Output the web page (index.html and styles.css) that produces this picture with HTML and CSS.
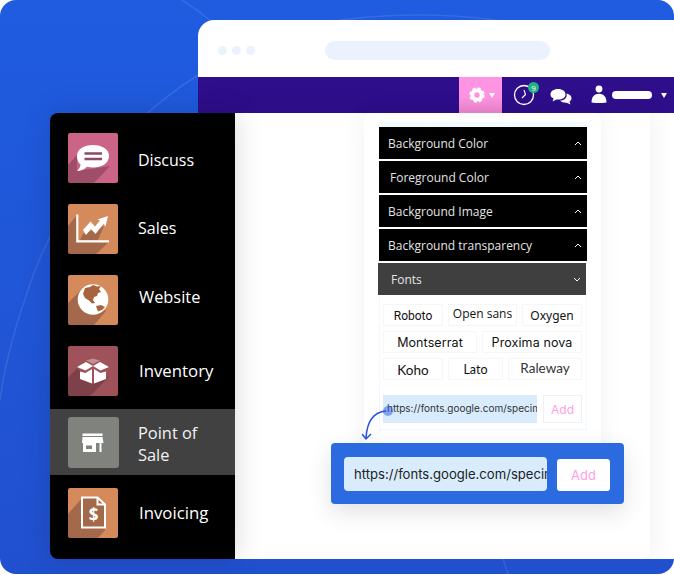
FILE: index.html
```html
<!DOCTYPE html>
<html lang="en">
<head>
    <meta charset="UTF-8">
    <title>Theme fonts</title>
    <link rel="stylesheet" href="styles.css">
</head>
<body>
<div class="stage">
    <svg class="lines" width="674" height="574" viewBox="0 0 674 574">
        <path d="M182 0 Q198 10 212 22"/>
        <path d="M198 75 C120 125 55 205 28 290 C14 330 4 370 0 400"/>
        <path d="M340 20 Q420 10 495 20"/>
        <path d="M503 559 L508 574"/>
    </svg>

    <div class="window">
        <div class="chrome">
            <div class="dots"><span></span><span></span><span></span></div>
            <div class="address"></div>
        </div>
        <div class="nav">
            <div class="nav-settings">
                <svg width="16" height="16" viewBox="0 0 18 18">
                    <circle class="gear-ring" cx="9" cy="9" r="5.2"/>
                    <circle class="gear-teeth" cx="9" cy="9" r="7.2"/>
                </svg>
                <span class="caret"></span>
            </div>
            <div class="nav-clock">
                <svg width="24" height="24" viewBox="0 0 24 24">
                    <circle class="clock-face" cx="11" cy="13" r="9.5"/>
                    <path class="clock-hands" d="M11 8 L12.5 12.5 L9 16"/>
                </svg>
                <span class="badge">9</span>
            </div>
            <svg class="nav-chat" width="22" height="18" viewBox="0 0 22 18">
                <path class="bubble" d="M8 1 C12.5 1 15.5 3.4 15.5 6.4 C15.5 9.4 12.5 11.5 8 11.5 L6.5 11.5 L2.5 13.5 L3.6 10.6 C1.6 9.6 0.5 8.2 0.5 6.4 C0.5 3.4 3.5 1 8 1 Z"/>
                <path class="bubble" d="M16.6 5.5 C19.6 6 21.5 8 21.5 10.2 C21.5 11.8 20.6 12.9 19.5 13.7 L20.6 16.6 L16.5 14.8 C14.4 15 11.5 14.4 10 12.6 C13.5 12.6 17.4 10.4 16.6 5.5 Z"/>
            </svg>
            <svg class="nav-user" width="16" height="18" viewBox="0 0 16 18">
                <circle class="bubble" cx="8" cy="4" r="3.4"/>
                <path class="bubble" d="M0.5 17.5 C0.5 12 3.5 8.8 8 8.8 C12.5 8.8 15.5 12 15.5 17.5 Q8 18.5 0.5 17.5 Z"/>
            </svg>
            <span class="nav-name"></span>
            <span class="caret nav-caret"></span>
        </div>
        <div class="main">
            <div class="card">
                <div class="accordion">
                    <div class="acc-bar">Background Color
                        <svg class="chev" width="8" height="5" viewBox="0 0 8 5"><path d="M1 4 L4 1 L7 4"/></svg>
                    </div>
                    <div class="acc-bar acc-shift">Foreground Color
                        <svg class="chev" width="8" height="5" viewBox="0 0 8 5"><path d="M1 4 L4 1 L7 4"/></svg>
                    </div>
                    <div class="acc-bar">Background Image
                        <svg class="chev" width="8" height="5" viewBox="0 0 8 5"><path d="M1 4 L4 1 L7 4"/></svg>
                    </div>
                    <div class="acc-bar">Background transparency
                        <svg class="chev" width="8" height="5" viewBox="0 0 8 5"><path d="M1 4 L4 1 L7 4"/></svg>
                    </div>
                    <div class="acc-bar acc-open">Fonts
                        <svg class="chev" width="8" height="5" viewBox="0 0 8 5"><path d="M1 1 L4 4 L7 1"/></svg>
                    </div>
                    <div class="fonts">
                        <div class="chip-row">
                            <span class="chip w60 f-roboto">Roboto</span>
                            <span class="chip w69 f-open">Open sans</span>
                            <span class="chip w60 f-oxygen">Oxygen</span>
                        </div>
                        <div class="chip-row">
                            <span class="chip w94 f-mont">Montserrat</span>
                            <span class="chip w100 f-mont">Proxima nova</span>
                        </div>
                        <div class="chip-row">
                            <span class="chip w60 f-koho">Koho</span>
                            <span class="chip w55 f-lato">Lato</span>
                            <span class="chip w74 f-raleway">Raleway</span>
                        </div>
                        <div class="url-row">
                            <div class="url-input">https://fonts.google.com/specim</div>
                            <div class="url-add">Add</div>
                        </div>
                    </div>
                </div>
            </div>
        </div>
    </div>

    <div class="sidebar">
        <div class="app">
            <svg class="app-icon" width="50" height="50" viewBox="0 0 50 50">
                <rect class="bg-rose" width="50" height="50" rx="2"/>
                <path class="long-shadow" d="M9 22 L0 32 V48 Q0 50 2 50 H26 L42 33 L22 36 L9 38 Z"/>
                <path class="glyph" d="M25 12 C34 12 41 16 41 23 C41 30 34 34.5 25 34.5 C23 34.5 21 34.2 19 33.8 C16 37 12 38 9 38 C11 36 12.5 34 12.5 31.5 C10 29.5 9 26.5 9 23 C9 16 16 12 25 12 Z"/>
                <path class="discuss-bars" d="M16.5 20.5 H34 M16.5 26 H34"/>
            </svg>
            <span class="app-name name-low">Discuss</span>
        </div>
        <div class="app">
            <svg class="app-icon" width="50" height="50" viewBox="0 0 50 50">
                <rect class="bg-orange" width="50" height="50" rx="2"/>
                <path class="long-shadow" d="M9 11 L0 22 V48 Q0 50 2 50 H28 L41 38 H9 Z"/>
                <path class="long-shadow" d="M15 30 L36 22 L30 36 H12 Z"/>
                <path class="sales-axis" d="M9.3 10.5 V37.3 H41"/>
                <path class="glyph" d="M15 26 L22.5 17.5 L27 22.5 L32 16.5 L29.5 15.5 L40 12 L37.5 22.5 L35.5 20 L27.5 30 L23 25 L18 31 Z"/>
            </svg>
            <span class="app-name name-up">Sales</span>
        </div>
        <div class="app">
            <svg class="app-icon" width="50" height="50" viewBox="0 0 50 50">
                <rect class="bg-orange" width="50" height="50" rx="2"/>
                <path class="long-shadow" d="M14 14 L0 28 V48 Q0 50 2 50 H26 L38 36 Z"/>
                <circle class="glyph" cx="25" cy="24.5" r="15.3"/>
                <path class="globe-land" d="M17 13 L22 12 L25 10 L29 11.5 L33 11 L31 14 L33 17 L30 18 L29 21 L26 22 L25 25 L27 28 L24 28.5 L21 25.5 L17 23 L15 19 Z"/>
                <path class="globe-land" d="M28 31 L33 30 L37 32 L34 35 L30 36.5 L29 34 Z"/>
            </svg>
            <span class="app-name name-high">Website</span>
        </div>
        <div class="app">
            <svg class="app-icon" width="50" height="50" viewBox="0 0 50 50">
                <rect class="bg-wine" width="50" height="50" rx="2"/>
                <path class="long-shadow" d="M9 22 L0 32 V48 Q0 50 2 50 H22 L42 30 L25 38 Z"/>
                <path class="glyph" d="M9 21 L18 16 L25 20 L17.5 24.5 Z M41 21 L32 16 L25 20 L32.5 24.5 Z"/>
                <path class="glyph" d="M18 14.5 L25 12.5 L32 14.5 L25 18 Z" opacity="0.35"/>
                <path class="glyph" d="M12 25.5 L17.5 27 L24 23 V37.5 L12 33 Z M26 23 L32.5 27 L38 25.5 V33 L26 37.5 Z"/>
            </svg>
            <span class="app-name name-wide">Inventory</span>
        </div>
        <div class="app app-active">
            <svg class="app-icon" width="51" height="51" viewBox="0 0 51 51">
                <rect class="bg-grey" width="51" height="51" rx="3"/>
                <path class="glyph" d="M14.5 16.5 H34.5 V19 H14.5 Z M14.5 20 H34.5 L35.5 26 H14 Z"/>
                <path class="glyph" fill-rule="evenodd" d="M15 26 H28 V35 H15 Z M18 28.5 V32 H24 V28.5 Z"/>
                <path class="glyph" d="M31.5 26 H33.5 V35 H31.5 Z"/>
            </svg>
            <span class="app-name">Point of Sale</span>
        </div>
        <div class="app">
            <svg class="app-icon" width="50" height="50" viewBox="0 0 50 50">
                <rect class="bg-orange" width="50" height="50" rx="2"/>
                <path class="long-shadow" d="M14 10 L0 26 V48 Q0 50 2 50 H30 L37 42 V16 L30 10 Z"/>
                <path class="doc" d="M14 9.5 H29.5 L37 16.5 V39.5 H14 Z"/>
                <path class="doc" d="M29.5 9.5 V16.5 H37"/>
                <text class="dollar" x="25.5" y="33" text-anchor="middle">$</text>
            </svg>
            <span class="app-name name-wide">Invoicing</span>
        </div>
    </div>

    <div class="url-bar">
        <div class="url-bar-input">https://fonts.google.com/specim</div>
        <div class="url-bar-add">Add</div>
    </div>

    <span class="drag-dot"></span>
    <svg class="drag-arrow" width="30" height="34" viewBox="0 0 30 34">
        <path d="M24 1 C12 2 5 11 4 28"/>
        <path d="M0 24 L4 29 L9 24"/>
    </svg>
</div>
</body>
</html>
```

FILE: styles.css
```css
* {
    box-sizing: border-box;
}

body {
    margin: 0;
    background: #fff;
    font-family: "Open Sans", "Liberation Sans", sans-serif;
}

.stage {
    position: relative;
    width: 674px;
    height: 574px;
    overflow: hidden;
    background: linear-gradient(180deg, #1f5ce0 0%, #2150cf 100%);
    border-radius: 16px;
}

.lines {
    position: absolute;
    top: 0;
    left: 0;
}

.lines path {
    fill: none;
    stroke: rgba(255, 255, 255, 0.1);
    stroke-width: 1.5;
}

/* browser window */
.window {
    position: absolute;
    top: 20px;
    left: 198px;
    right: 0;
    bottom: 15px;
    display: flex;
    flex-direction: column;
    background: #fff;
    border-top-left-radius: 16px;
    overflow: hidden;
}

.chrome {
    display: flex;
    align-items: center;
    flex: 0 0 57px;
    padding: 3px 0 0 20px;
}

.dots {
    display: flex;
    gap: 5px;
    margin-right: 70px;
}

.dots span {
    width: 9px;
    height: 9px;
    background: #ebf2fe;
    border-radius: 50%;
}

.address {
    width: 225px;
    height: 19px;
    background: #ebf2fe;
    border-radius: 10px;
}

.nav {
    display: flex;
    align-items: center;
    flex: 0 0 36px;
    padding-left: 261px;
    background: #2f0e8c;
}

.nav-settings {
    display: flex;
    align-items: center;
    width: 43px;
    height: 36px;
    padding-left: 10px;
    background: linear-gradient(180deg, #ff94e2 60%, #ee88d2 100%);
}

.gear-ring {
    fill: none;
    stroke: #fff;
    stroke-width: 4.4;
}

.gear-teeth {
    fill: none;
    stroke: #fff;
    stroke-width: 3;
    stroke-dasharray: 3.2 2.45;
}

.caret {
    width: 0;
    height: 0;
    margin-left: 4px;
    border-top: 5px solid #fff;
    border-left: 3px solid transparent;
    border-right: 3px solid transparent;
}

.nav-clock {
    position: relative;
    width: 24px;
    height: 24px;
    margin-left: 11px;
    margin-top: -2px;
}

.clock-face {
    fill: none;
    stroke: #fff;
    stroke-width: 1.3;
}

.clock-hands {
    fill: none;
    stroke: #fff;
    stroke-width: 1.1;
}

.badge {
    position: absolute;
    top: 0;
    right: -2px;
    width: 11px;
    height: 11px;
    background: #1fb380;
    border-radius: 50%;
    color: #fff;
    font-size: 8px;
    line-height: 11px;
    text-align: center;
}

.nav-chat {
    margin-left: 13px;
    margin-top: 3px;
}

.bubble {
    fill: #fff;
}

.nav-user {
    margin-left: 19px;
    margin-top: -2px;
}

.nav-name {
    width: 40px;
    height: 8px;
    margin-left: 5px;
    background: #fff;
    border-radius: 4px;
}

.nav-caret {
    margin-left: 9px;
}

.main {
    flex: 1;
    width: 452px;
    padding-left: 166px;
    background: #fff;
    border-bottom-right-radius: 8px;
    box-shadow: 0 0 30px rgba(0, 0, 0, 0.07);
}

.card {
    width: 237px;
    height: 360px;
    padding: 9px 14px 0 15px;
    background: #fff;
    border-radius: 8px;
    box-shadow: 0 0 24px rgba(0, 0, 0, 0.06);
}

.accordion {
    border-top: 5px solid #f3fbff;
}

.acc-bar {
    display: flex;
    align-items: center;
    justify-content: space-between;
    height: 32px;
    margin-bottom: 2px;
    padding: 0 5px 0 9px;
    background: #000;
    color: #e4e4e4;
    font-size: 12px;
}

.acc-shift {
    padding-left: 11px;
}

.acc-open {
    margin: 0 1px 0 -1px;
    padding-left: 13px;
    background: #3f3f3f;
}

.chev path {
    fill: none;
    stroke: #fff;
    stroke-width: 1;
}

.fonts {
    display: flex;
    flex-direction: column;
    gap: 5px;
    height: 135px;
    padding: 9px 3px 0;
    border: 1px solid #f0f9ff;
    border-top: 0;
}

.chip-row {
    display: flex;
    gap: 5px;
}

.chip {
    display: block;
    height: 22px;
    background: #fff;
    border: 1px solid #f6f6f6;
    color: #111;
    font-size: 12px;
    line-height: 22px;
    text-align: center;
    white-space: nowrap;
}

.w55 { width: 55px; }
.w60 { width: 60px; }
.w69 { width: 69px; }
.w74 { width: 74px; }
.w94 { width: 94px; }
.w100 { width: 100px; }

.f-roboto { font-family: "Roboto", sans-serif; }
.f-open { font-family: "Open Sans", sans-serif; line-height: 18px; }
.f-oxygen { font-family: "Noto Sans", sans-serif; }
.f-mont { font-family: "Inter", sans-serif; font-size: 12.5px; letter-spacing: 0.1px; }
.f-koho { font-family: "Lato", sans-serif; font-size: 13.5px; }
.f-lato { font-family: "Lato", sans-serif; font-size: 12.5px; }
.f-raleway { font-family: "Lato", sans-serif; font-size: 13.5px; line-height: 19px; color: #333; }

.url-row {
    display: flex;
    gap: 6px;
    margin-top: 10px;
}

.url-input {
    width: 154px;
    height: 28px;
    padding-left: 4px;
    overflow: hidden;
    background: #d8ecfd;
    color: #333;
    font-family: "Inter", sans-serif;
    font-size: 10px;
    line-height: 27px;
    white-space: nowrap;
}

.url-add {
    width: 39px;
    height: 28px;
    border: 1px solid #eef0f2;
    color: #ffa0e6;
    font-family: "Inter", sans-serif;
    font-size: 12px;
    line-height: 28px;
    text-align: center;
}

/* app menu */
.sidebar {
    position: absolute;
    top: 113px;
    left: 50px;
    display: flex;
    flex-direction: column;
    gap: 21px;
    width: 185px;
    height: 446px;
    padding-top: 20px;
    background: #000;
    border-radius: 8px 0 0 8px;
    box-shadow: 0 0 30px rgba(0, 0, 0, 0.15);
}

.app {
    display: flex;
    align-items: center;
    gap: 20px;
    padding-left: 18px;
    color: #fff;
    font-size: 16px;
    font-weight: 500;
}

.app-active {
    height: 66px;
    margin: -8px 0;
    background: #414141;
}

.app-icon {
    flex: none;
    display: block;
}

.app-name {
    line-height: 22px;
}

.app-active .app-name {
    width: 90px;
    margin-top: 4px;
    margin-left: -1px;
    color: #f2f2f2;
    font-size: 16.4px;
}

.name-low {
    margin-top: 4px;
}

.name-up {
    margin-top: -2px;
}

.name-high {
    margin-top: -7px;
    margin-left: 1px;
    font-size: 16.4px;
}

.name-wide {
    margin-left: 1px;
    font-size: 16.8px;
}

.bg-rose { fill: #cc6487; }
.bg-orange { fill: #d58a5c; }
.bg-wine { fill: #a0525a; }
.bg-grey { fill: #80827e; }

.long-shadow {
    fill: rgba(40, 20, 30, 0.28);
}

.glyph {
    fill: #fff;
}

.discuss-bars {
    fill: none;
    stroke: #8a4a68;
    stroke-width: 2.4;
}

.sales-axis {
    fill: none;
    stroke: #fff;
    stroke-width: 2.2;
}

.globe-land {
    fill: #a7643f;
}

.doc {
    fill: none;
    stroke: #fff;
    stroke-width: 2;
}

.dollar {
    fill: #fff;
    font-size: 17px;
    font-weight: 700;
}

/* url bar over the window */
.url-bar {
    position: absolute;
    top: 443px;
    left: 331px;
    display: flex;
    align-items: flex-start;
    gap: 10px;
    width: 293px;
    height: 61px;
    padding: 14px 14px 0 13px;
    background: #2c6bdf;
    border-radius: 4px;
    box-shadow: 0 8px 24px rgba(0, 0, 0, 0.12);
}

.url-bar-input {
    width: 203px;
    height: 34px;
    padding-left: 10px;
    overflow: hidden;
    background: #d8ecfd;
    border-radius: 4px;
    color: #222;
    font-family: "Inter", sans-serif;
    font-size: 13.1px;
    line-height: 34px;
    white-space: nowrap;
}

.url-bar-add {
    width: 53px;
    height: 32px;
    margin-top: 2px;
    background: #fff;
    border-radius: 3px;
    color: #ffa0e6;
    font-family: "Inter", sans-serif;
    font-size: 13px;
    line-height: 32px;
    text-align: center;
}

.drag-dot {
    position: absolute;
    top: 406px;
    left: 383px;
    width: 10px;
    height: 10px;
    background: rgba(45, 90, 230, 0.5);
    border-radius: 50%;
}

.drag-arrow {
    position: absolute;
    top: 410px;
    left: 362px;
}

.drag-arrow path {
    fill: none;
    stroke: #2351e0;
    stroke-width: 1.5;
}
```
